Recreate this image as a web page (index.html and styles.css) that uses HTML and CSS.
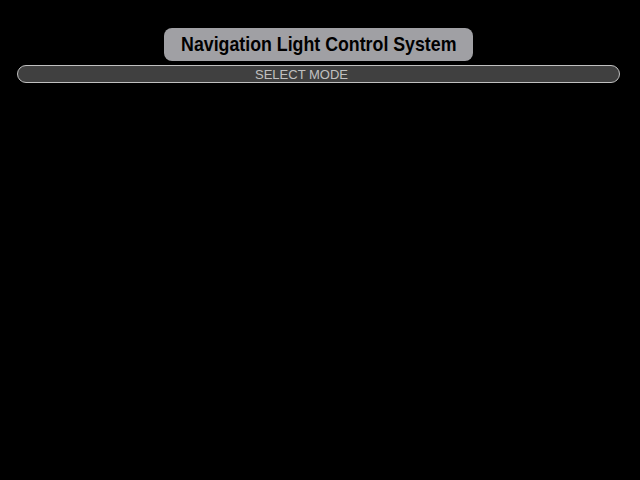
FILE: index.html
```html
<!DOCTYPE html>
<html>
<head>
<meta charset="utf-8">
<link rel="stylesheet" href="styles.css">
</head>
<body>
<div class="screen">
  <div class="title-row">
    <div class="title"><span class="title-text">Navigation Light Control System</span></div>
  </div>
  <div class="mode-bar"><span class="mode-text">SELECT MODE</span></div>
</div>
</body>
</html>
```
FILE: styles.css
```css
html, body {
  margin: 0;
  padding: 0;
  background: #000;
  width: 640px;
  height: 480px;
  overflow: hidden;
}
.screen {
  display: flex;
  flex-direction: column;
  padding: 28px 20px 0 17px;
}
.title-row {
  display: flex;
  justify-content: center;
}
.title {
  width: 309px;
  height: 33px;
  box-sizing: border-box;
  background: #a0a0a4;
  border-radius: 8px;
  display: flex;
  align-items: center;
  justify-content: center;
  padding-bottom: 1px;
}
.title-text {
  display: inline-block;
  white-space: nowrap;
  font-family: "Liberation Sans", Arial, sans-serif;
  font-weight: bold;
  font-size: 21px;
  color: #000;
  transform: scaleX(0.846);
}
.mode-bar {
  margin-top: 4px;
  width: 603px;
  height: 18px;
  box-sizing: border-box;
  border: 1px solid #c0c0c0;
  border-radius: 9px;
  background: #404040;
  display: flex;
  align-items: center;
  justify-content: center;
  padding-right: 34px;
  padding-top: 1px;
}
.mode-text {
  font-family: "Liberation Sans", Arial, sans-serif;
  font-size: 13px;
  color: #c0c0c0;
}
```
